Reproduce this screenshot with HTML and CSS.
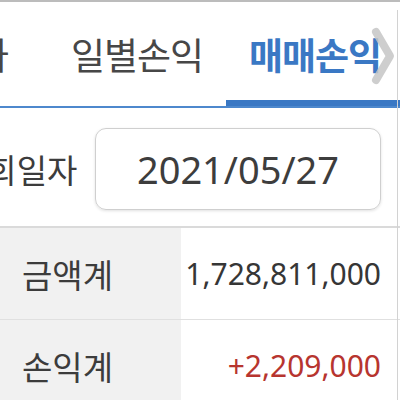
FILE: index.html
```html
<!DOCTYPE html>
<html lang="ko">
<head>
<meta charset="utf-8">
<link rel="stylesheet" href="styles.css">
</head>
<body>
<div class="screen">
  <div class="tabbar">
    <div class="tab tab-prev">현재가</div>
    <div class="tab">일별손익</div>
    <div class="tab active">매매손익</div>
    <svg class="chevron" width="26" height="60" viewBox="0 0 26 60"><polyline points="6,6 20,30 6,54" fill="none" stroke="#c6c6c6" stroke-width="8" stroke-linecap="round" stroke-linejoin="round" opacity="0.85"/></svg>
  </div>
  <div class="search">
    <div class="search-label">조회일자</div>
    <div class="date-box">2021/05/27</div>
  </div>
  <div class="table">
    <div class="row">
      <div class="cell-label">금액계</div>
      <div class="cell-value">1,728,811,000</div>
    </div>
    <div class="row">
      <div class="cell-label">손익계</div>
      <div class="cell-value profit">+2,209,000</div>
    </div>
  </div>
</div>
</body>
</html>
```

FILE: styles.css
```css
html, body {
  margin: 0;
  padding: 0;
  width: 400px;
  height: 400px;
  overflow: hidden;
  background: #ffffff;
}
.screen {
  width: 400px;
  height: 400px;
  border-top: 2px solid #bcbcbc;
  box-sizing: border-box;
  font-family: "Noto Sans CJK KR", "Noto Sans", sans-serif;
  position: relative;
  overflow: hidden;
}
.tabbar {
  position: relative;
  display: flex;
  height: 106px;
  border-bottom: 2px solid #4d88cd;
  box-sizing: border-box;
  overflow: hidden;
}
.tab {
  flex: 0 0 178px;
  min-width: 0;
  display: flex;
  align-items: center;
  justify-content: center;
  font-size: 37px;
  letter-spacing: -1px;
  color: #474747;
  white-space: nowrap;
  box-sizing: border-box;
}
.tab-prev {
  flex: 0 0 48px;
  justify-content: flex-end;
  padding-right: 40px;
}
.tab.active {
  color: #3a78c4;
  font-weight: 700;
  border-bottom: 6px solid #3a78c4;
  padding-top: 6px;
}
.chevron {
  position: absolute;
  right: 4px;
  top: 24px;
}
.screen::after {
  content: "";
  position: absolute;
  right: 2px;
  top: 8px;
  bottom: 0;
  width: 1px;
  background: #d2d2d2;
}
.search {
  display: flex;
  align-items: center;
  height: 120px;
  border-bottom: 2px solid #dadada;
  box-sizing: border-box;
  padding-top: 3px;
}
.search-label {
  font-size: 33px;
  color: #3c3c3c;
  margin-left: -44px;
  width: 132px;
  flex: 0 0 132px;
  white-space: nowrap;
}
.date-box {
  margin-left: 7px;
  width: 286px;
  height: 82px;
  border: 1.5px solid #cfcfcf;
  border-radius: 11px;
  box-shadow: 0 1px 3px rgba(0,0,0,0.12);
  box-sizing: border-box;
  display: flex;
  align-items: center;
  justify-content: center;
  font-family: "Noto Sans", sans-serif;
  font-size: 38px;
  color: #3d3d3d;
}
.table {
  display: flex;
  flex-direction: column;
}
.row {
  display: grid;
  grid-template-columns: 181px 1fr;
  height: 91px;
  border-bottom: 1px solid #e0e0e0;
}
.cell-label {
  background: #f1f1f1;
  display: flex;
  align-items: center;
  padding-left: 22px;
  font-size: 33px;
  color: #3c3c3c;
}
.cell-value {
  display: flex;
  align-items: center;
  justify-content: flex-end;
  padding-right: 19px;
  font-family: "Noto Sans", sans-serif;
  font-size: 30px;
  color: #363636;
}
.cell-value.profit {
  color: #b7352f;
}
```
